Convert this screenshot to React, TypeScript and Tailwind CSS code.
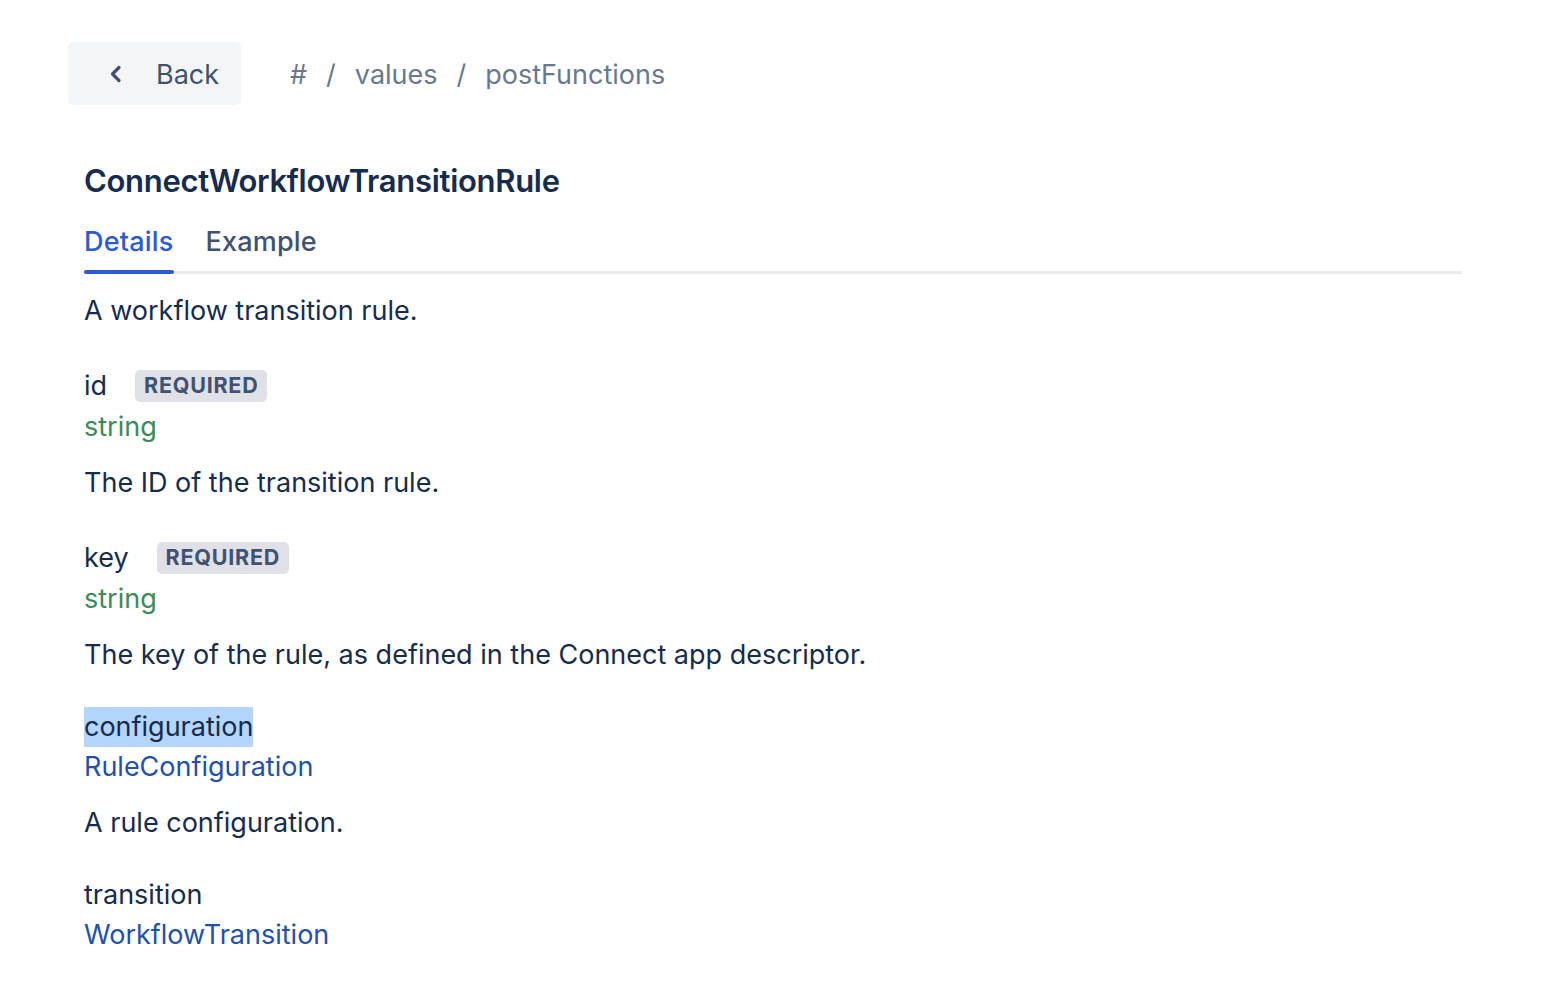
import { ReactNode } from 'react';

interface Field {
    name: string;
    type: string;
    link?: boolean;
    required?: boolean;
    highlight?: boolean;
    description?: string;
}

const fields: Field[] = [
    { name: 'id', type: 'string', required: true, description: 'The ID of the transition rule.' },
    { name: 'key', type: 'string', required: true, description: 'The key of the rule, as defined in the Connect app descriptor.' },
    { name: 'configuration', type: 'RuleConfiguration', link: true, highlight: true, description: 'A rule configuration.' },
    { name: 'transition', type: 'WorkflowTransition', link: true },
];

function Crumb({ children }: { children: ReactNode }) {
    return <span className="text-[#6b778c]">{children}</span>;
}

export default function App() {
    return (
        <div className="min-h-screen bg-white font-['Inter','Noto_Sans',sans-serif] text-[27px] text-[#172b4d]">
            <div className="pl-[68px] pr-[90px] pt-[42px]">
                {/* Top bar */}
                <div className="flex items-center">
                    <button className="flex h-[63px] w-[173px] items-center rounded-[5px] bg-[#f4f5f7] pl-[41px] pt-[3px] text-[#42526e]">
                        <svg width="14" height="18" viewBox="0 0 14 18" className="mr-[33px] -mt-[3px]">
                            <path d="M10 2.5 L3.5 9 L10 15.5" fill="none" stroke="#42526e" strokeWidth="3.2" strokeLinecap="round" strokeLinejoin="round" />
                        </svg>
                        <span>Back</span>
                    </button>
                    <div className="ml-[49px] flex items-center gap-[19px] pt-[3px]">
                        <Crumb>#</Crumb>
                        <Crumb>/</Crumb>
                        <Crumb>values</Crumb>
                        <Crumb>/</Crumb>
                        <Crumb>postFunctions</Crumb>
                    </div>
                </div>

                <div className="pl-[16px]">
                    <h1 className="mt-[56px] text-[31px] font-semibold leading-[40px] tracking-[-0.3px] text-[#172b4d]">
                        ConnectWorkflowTransitionRule
                    </h1>

                    {/* Tabs */}
                    <div className="mt-[21px] flex border-b-[3px] border-[#ebecf0]">
                        <div className="relative mr-[32px] pb-[9px] font-medium leading-[40px] tracking-[0.2px] text-[#2d5bd0]">
                            Details
                            <div className="absolute bottom-[-3px] left-0 right-0 h-[4px] rounded-full bg-[#2d5bd0]" />
                        </div>
                        <div className="pb-[9px] font-medium leading-[40px] tracking-[0.2px] text-[#42526e]">Example</div>
                    </div>

                    <p className="mt-[17px] leading-[40px]">A workflow transition rule.</p>

                    <div className="mt-[32px] flex flex-col gap-[32px]">
                        {fields.map((f) => (
                            <div key={f.name}>
                                <div className={`flex items-center ${f.required ? 'h-[44px] pt-[1px]' : 'h-[40px]'}`}>
                                    <span className={`leading-[40px] ${f.highlight ? 'bg-[#b4d5fe]' : ''}`}>{f.name}</span>
                                    {f.required && (
                                        <span className="ml-[28px] flex h-[32px] items-center rounded-[5px] bg-[#dfe1e6] px-[9px] text-[21.5px] font-bold tracking-[0.75px] text-[#42526e]">
                                            REQUIRED
                                        </span>
                                    )}
                                </div>
                                <div className={`leading-[40px] ${f.link ? 'text-[#2350a9]' : 'text-[#3b8a5c]'}`}>{f.type}</div>
                                {f.description && <p className="mt-[16px] leading-[40px]">{f.description}</p>}
                            </div>
                        ))}
                    </div>
                </div>
            </div>
        </div>
    );
}
